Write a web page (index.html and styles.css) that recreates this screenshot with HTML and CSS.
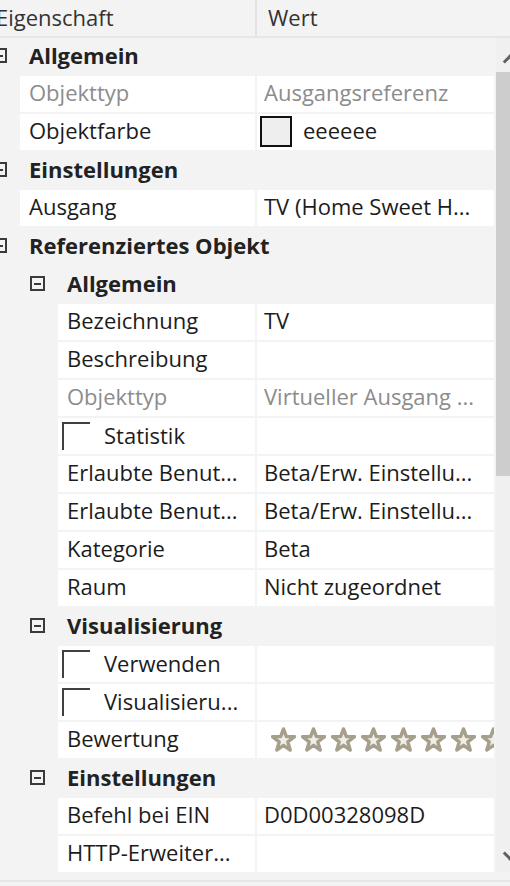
FILE: index.html
```html
<!DOCTYPE html>
<html lang="de">
<head>
<meta charset="utf-8">
<title>Eigenschaften</title>
<link rel="stylesheet" href="styles.css">
</head>
<body>
<div class="grid">
  <div class="header">
    <div class="hcell hname">Eigenschaft</div>
    <div class="hcell hvalue">Wert</div>
  </div>
  <div class="body">
    <div class="rows">
      <div class="cat l1"><span class="box"></span><span class="ctext">Allgemein</span></div>
      <div class="row l1 dis"><div class="name">Objekttyp</div><div class="value">Ausgangsreferenz</div></div>
      <div class="row l1"><div class="name">Objektfarbe</div><div class="value"><span class="swatch"></span>eeeeee</div></div>
      <div class="cat l1"><span class="box"></span><span class="ctext">Einstellungen</span></div>
      <div class="row l1"><div class="name">Ausgang</div><div class="value">TV (Home Sweet H...</div></div>
      <div class="cat l1"><span class="box"></span><span class="ctext">Referenziertes Objekt</span></div>
      <div class="cat l2"><span class="box"></span><span class="ctext">Allgemein</span></div>
      <div class="row l2"><div class="name">Bezeichnung</div><div class="value">TV</div></div>
      <div class="row l2"><div class="name">Beschreibung</div><div class="value"></div></div>
      <div class="row l2 dis"><div class="name">Objekttyp</div><div class="value">Virtueller Ausgang ...</div></div>
      <div class="row l2"><div class="name chk"><span class="check"></span>Statistik</div><div class="value"></div></div>
      <div class="row l2"><div class="name">Erlaubte Benut...</div><div class="value">Beta/Erw. Einstellu...</div></div>
      <div class="row l2"><div class="name">Erlaubte Benut...</div><div class="value">Beta/Erw. Einstellu...</div></div>
      <div class="row l2"><div class="name">Kategorie</div><div class="value">Beta</div></div>
      <div class="row l2"><div class="name">Raum</div><div class="value">Nicht zugeordnet</div></div>
      <div class="cat l2"><span class="box"></span><span class="ctext">Visualisierung</span></div>
      <div class="row l2"><div class="name chk"><span class="check"></span>Verwenden</div><div class="value"></div></div>
      <div class="row l2"><div class="name chk"><span class="check"></span>Visualisieru...</div><div class="value"></div></div>
      <div class="row l2"><div class="name">Bewertung</div><div class="value stars">
        <svg class="star" viewBox="0 0 26 26"><polygon points="13,2 16,10 24.5,10 17.5,15.5 20,24 13,19 6,24 8.5,15.5 1.5,10 10,10"/></svg>
        <svg class="star" viewBox="0 0 26 26"><polygon points="13,2 16,10 24.5,10 17.5,15.5 20,24 13,19 6,24 8.5,15.5 1.5,10 10,10"/></svg>
        <svg class="star" viewBox="0 0 26 26"><polygon points="13,2 16,10 24.5,10 17.5,15.5 20,24 13,19 6,24 8.5,15.5 1.5,10 10,10"/></svg>
        <svg class="star" viewBox="0 0 26 26"><polygon points="13,2 16,10 24.5,10 17.5,15.5 20,24 13,19 6,24 8.5,15.5 1.5,10 10,10"/></svg>
        <svg class="star" viewBox="0 0 26 26"><polygon points="13,2 16,10 24.5,10 17.5,15.5 20,24 13,19 6,24 8.5,15.5 1.5,10 10,10"/></svg>
        <svg class="star" viewBox="0 0 26 26"><polygon points="13,2 16,10 24.5,10 17.5,15.5 20,24 13,19 6,24 8.5,15.5 1.5,10 10,10"/></svg>
        <svg class="star" viewBox="0 0 26 26"><polygon points="13,2 16,10 24.5,10 17.5,15.5 20,24 13,19 6,24 8.5,15.5 1.5,10 10,10"/></svg>
        <svg class="star" viewBox="0 0 26 26"><polygon points="13,2 16,10 24.5,10 17.5,15.5 20,24 13,19 6,24 8.5,15.5 1.5,10 10,10"/></svg>
      </div></div>
      <div class="cat l2"><span class="box"></span><span class="ctext">Einstellungen</span></div>
      <div class="row l2"><div class="name">Befehl bei EIN</div><div class="value">D0D00328098D</div></div>
      <div class="row l2"><div class="name">HTTP-Erweiter...</div><div class="value"></div></div>
    </div>
    <div class="scrollbar">
      <div class="sarrow up"></div>
      <div class="thumb"></div>
      <div class="track"></div>
      <div class="sarrow down"></div>
    </div>
  </div>
  <div class="footer"></div>
</div>
</body>
</html>
```
FILE: styles.css
```css
html, body {
  margin: 0;
  padding: 0;
  background: #f3f3f3;
}
body {
  width: 510px;
  height: 886px;
  overflow: hidden;
  font-family: "Open Sans", "Noto Sans", sans-serif;
  font-size: 22px;
  color: #1c1c1c;
}
.grid {
  display: flex;
  flex-direction: column;
  width: 510px;
  height: 886px;
}
.header {
  display: flex;
  height: 36px;
  border-bottom: 2px solid #e6e6e6;
  background: #f3f3f3;
  color: #333333;
  line-height: 34px;
}
.hcell {
  white-space: nowrap;
}
.hname {
  width: 255px;
  border-right: 2px solid #e2e2e2;
  text-indent: -4px;
  overflow: hidden;
}
.hvalue {
  padding-left: 11px;
}
.body {
  display: flex;
  gap: 2px;
  height: 836px;
}
.rows {
  width: 494px;
  display: flex;
  flex-direction: column;
  gap: 2px;
  overflow: hidden;
}
.row {
  display: grid;
  grid-template-columns: 255px 237px;
  column-gap: 2px;
  height: 36px;
  line-height: 33px;
  flex: none;
}
.name, .value {
  background: #ffffff;
  white-space: nowrap;
  overflow: hidden;
}
.name {
  padding-left: 9px;
}
.l1 .name {
  margin-left: 20px;
}
.l2 .name {
  margin-left: 58px;
}
.value {
  padding-left: 7px;
}
.dis {
  color: #8c8c8c;
}
.cat {
  display: flex;
  align-items: center;
  height: 36px;
  line-height: 33px;
  flex: none;
  font-weight: 700;
  color: #222222;
}
.cat.l1 {
  padding-left: 0;
  margin-left: -8px;
}
.cat.l2 {
  padding-left: 30px;
}
.box {
  position: relative;
  width: 15px;
  height: 15px;
  box-sizing: border-box;
  border: 2px solid #3a3a3a;
  margin-right: 22px;
  flex: none;
}
.box::after {
  content: "";
  position: absolute;
  left: 2px;
  right: 2px;
  top: 4.5px;
  height: 2px;
  background: #3a3a3a;
}
.swatch {
  display: inline-block;
  vertical-align: top;
  width: 32px;
  height: 31px;
  box-sizing: border-box;
  border: 2px solid #111111;
  background: #eeeeee;
  margin: 2px 11px 0 -4px;
}
.chk {
  display: flex;
  align-items: center;
  padding-left: 4px;
}
.check {
  width: 28px;
  height: 28px;
  box-sizing: border-box;
  border-top: 2px solid #404040;
  border-left: 2px solid #404040;
  margin-right: 14px;
  flex: none;
}
.stars {
  display: flex;
  align-items: center;
  gap: 5px;
  padding-left: 14px;
}
.star {
  width: 25px;
  height: 25px;
  flex: none;
}
.star polygon {
  fill: #efede6;
  stroke: #a69f8c;
  stroke-width: 3.5;
  stroke-linejoin: round;
}
.scrollbar {
  width: 14px;
  height: 834px;
  display: flex;
  flex-direction: column;
  background: #f0f0f0;
}
.sarrow {
  height: 34px;
  position: relative;
  flex: none;
}
.sarrow::after {
  content: "";
  position: absolute;
  left: 9px;
  width: 8px;
  height: 8px;
  border-left: 3px solid #606060;
  border-top: 3px solid #606060;
  transform: rotate(45deg);
}
.sarrow.up::after {
  top: 18px;
}
.sarrow.down {
  margin-top: auto;
}
.sarrow.down::after {
  top: 10px;
  transform: rotate(-135deg);
}
.thumb {
  height: 404px;
  background: #cdcdcd;
  flex: none;
}
.footer {
  height: 14px;
  margin-top: auto;
  box-sizing: border-box;
  border-bottom: 4px solid #f3f3f3;
  background: linear-gradient(#f3f3f3 0 8px, #e6e6e6 8px 10px);
}
```
